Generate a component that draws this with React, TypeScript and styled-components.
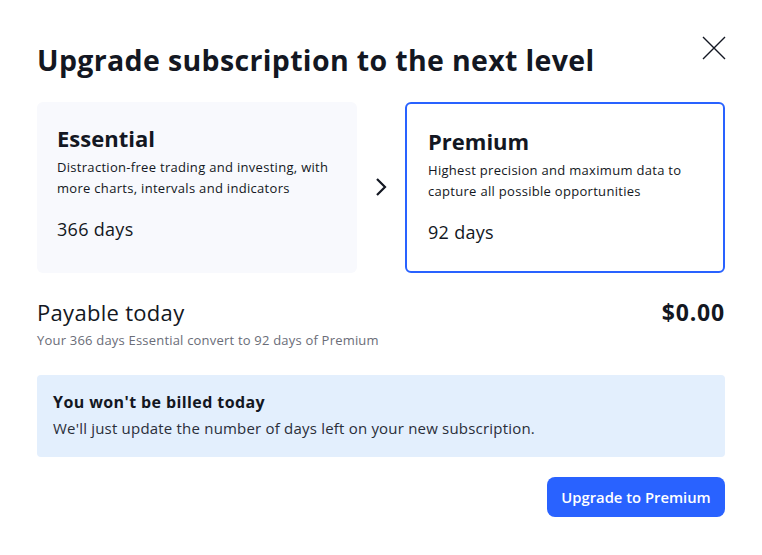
import { FC } from 'react'
import styled, { createGlobalStyle } from 'styled-components'

// ** Global **
const GlobalStyle = createGlobalStyle`
  html, body {
    margin: 0;
    padding: 0;
    background: #ffffff;
  }
  body {
    font-family: 'Open Sans', 'Noto Sans', sans-serif;
    color: #131722;
  }
  * {
    box-sizing: border-box;
  }
`

// ** Styles **
const Dialog = styled.div`
  width: 762px;
  height: 555px;
  padding: 34px 37px 0 37px;
  display: flex;
  flex-direction: column;
`

const Header = styled.div`
  display: flex;
  justify-content: space-between;
  align-items: flex-start;
  height: 68px;
`

const Title = styled.h1`
  margin: 0;
  font-size: 28.5px;
  font-weight: 700;
  line-height: 52px;
  letter-spacing: 0.35px;
`

const CloseButton = styled.button`
  border: none;
  background: none;
  padding: 0;
  margin: 0 -3px 0 0;
  width: 28px;
  height: 28px;
  display: flex;
  align-items: center;
  justify-content: center;
  cursor: pointer;
  color: #131722;
`

const Plans = styled.div`
  display: grid;
  grid-template-columns: 320px 1fr 320px;
  align-items: stretch;
  height: 171px;
`

const PlanCard = styled.div<{ selected?: boolean }>`
  border-radius: 6px;
  padding: ${p => (p.selected ? '20px 20px 0 21px' : '19px 20px 0 20px')};
  background: ${p => (p.selected ? '#ffffff' : '#f8f9fd')};
  border: ${p => (p.selected ? '2px solid #2962ff' : 'none')};
  display: flex;
  flex-direction: column;
`

const PlanName = styled.div`
  font-size: 22px;
  font-weight: 700;
  line-height: 34px;
`

const PlanText = styled.div`
  font-size: 13px;
  letter-spacing: 0.3px;
  line-height: 21px;
  color: #131722;
  margin-top: 2px;
`

const PlanDays = styled.div`
  font-size: 18px;
  letter-spacing: 0.3px;
  line-height: 26px;
  margin-top: 17px;
`

const ArrowCell = styled.div`
  display: flex;
  align-items: center;
  justify-content: center;
  padding-bottom: 2px;
`

const Payable = styled.div`
  display: flex;
  justify-content: space-between;
  align-items: flex-start;
  margin-top: 24px;
`

const PayableLabel = styled.div`
  font-size: 22px;
  letter-spacing: 0.3px;
  line-height: 30px;
`

const PayableNote = styled.div`
  font-size: 13px;
  letter-spacing: 0.2px;
  line-height: 18px;
  color: #6a6d78;
  margin-top: 4px;
`

const Price = styled.div`
  font-size: 23px;
  font-weight: 700;
  letter-spacing: 0.8px;
  line-height: 30px;
`

const Notice = styled.div`
  margin-top: 26px;
  background: #e3effd;
  border-radius: 4px;
  padding: 14px 16px 16px 16px;
  height: 82px;
`

const NoticeTitle = styled.div`
  font-size: 16px;
  font-weight: 700;
  letter-spacing: 0.4px;
  line-height: 26px;
`

const NoticeText = styled.div`
  font-size: 15px;
  letter-spacing: 0.2px;
  line-height: 26px;
  color: #2a2e39;
`

const Footer = styled.div`
  display: flex;
  justify-content: flex-end;
  margin-top: 20px;
`

const PrimaryButton = styled.button`
  background: #2962ff;
  color: #ffffff;
  border: none;
  border-radius: 8px;
  height: 40px;
  width: 178px;
  padding: 0;
  font-family: inherit;
  font-size: 14.8px;
  font-weight: 600;
  cursor: pointer;
`

// ** Icons **
const CloseIcon: FC = () => (
  <svg width="24" height="24" viewBox="0 0 24 24" fill="none">
    <path d="M1 1l22 22M23 1L1 23" stroke="currentColor" strokeWidth="1.4" />
  </svg>
)

const ChevronIcon: FC = () => (
  <svg width="14" height="20" viewBox="0 0 14 20" fill="none">
    <path d="M3 2l8 8-8 8" stroke="#131722" strokeWidth="2.2" />
  </svg>
)

// ** Components **
export default function App() {
  return (
    <>
      <GlobalStyle />
      <Dialog>
        <Header>
          <Title>Upgrade subscription to the next level</Title>
          <CloseButton aria-label="Close">
            <CloseIcon />
          </CloseButton>
        </Header>

        <Plans>
          <PlanCard>
            <PlanName>Essential</PlanName>
            <PlanText>
              Distraction-free trading and investing, with
              <br />
              more charts, intervals and indicators
            </PlanText>
            <PlanDays>366 days</PlanDays>
          </PlanCard>
          <ArrowCell>
            <ChevronIcon />
          </ArrowCell>
          <PlanCard selected>
            <PlanName>Premium</PlanName>
            <PlanText>
              Highest precision and maximum data to
              <br />
              capture all possible opportunities
            </PlanText>
            <PlanDays>92 days</PlanDays>
          </PlanCard>
        </Plans>

        <Payable>
          <div>
            <PayableLabel>Payable today</PayableLabel>
            <PayableNote>Your 366 days Essential convert to 92 days of Premium</PayableNote>
          </div>
          <Price>$0.00</Price>
        </Payable>

        <Notice>
          <NoticeTitle>You won't be billed today</NoticeTitle>
          <NoticeText>We'll just update the number of days left on your new subscription.</NoticeText>
        </Notice>

        <Footer>
          <PrimaryButton>Upgrade to Premium</PrimaryButton>
        </Footer>
      </Dialog>
    </>
  )
}
